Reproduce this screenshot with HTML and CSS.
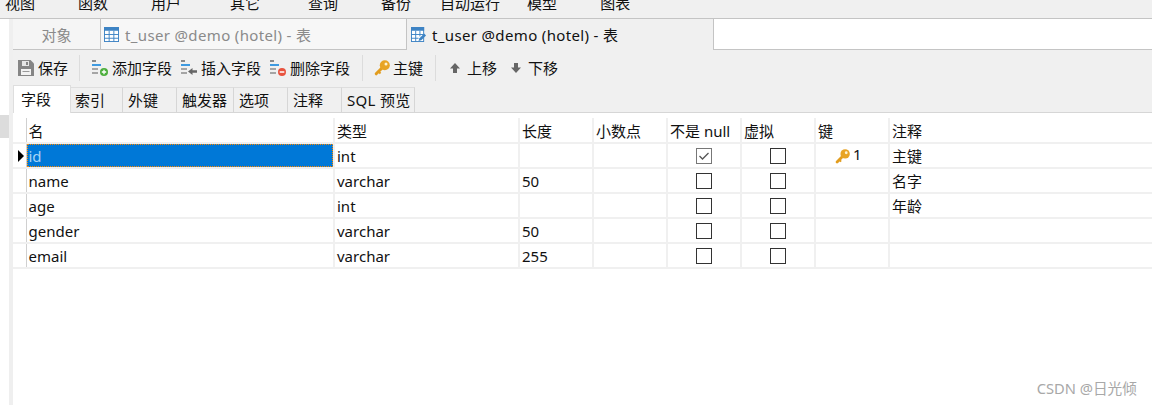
FILE: index.html
```html
<!DOCTYPE html>
<html lang="zh-CN">
<head>
    <meta charset="UTF-8">
    <title>t_user @demo (hotel) - 表</title>
    <link rel="stylesheet" href="styles.css">
</head>
<body>
    <svg class="icon-defs" width="0" height="0">
        <symbol id="key" viewBox="0 0 16 16">
            <path d="M9 7L2.200 13.800" fill="none" stroke="#e29d1f" stroke-width="3" stroke-linecap="round"/>
            <path d="M4.500 11.500l2 2" fill="none" stroke="#e29d1f" stroke-width="2"/>
            <circle cx="10.800" cy="5.200" r="5" fill="#e8a425"/>
            <circle cx="12" cy="4" r="1.500" fill="#fff3d0"/>
        </symbol>
        <symbol id="rows" viewBox="0 0 16 16">
            <rect x="0" y="0" width="4" height="2" fill="#8a8a8a"/>
            <rect x="0" y="4" width="9" height="2" fill="#3f9ae0"/>
            <rect x="0" y="8" width="6" height="2" fill="#a5a5a5"/>
            <rect x="0" y="12" width="6" height="2" fill="#a5a5a5"/>
        </symbol>
    </svg>

    <div class="menu">
        <span>视图</span><span>函数</span><span class="wide">用户</span><span class="wide2">其它</span><span>查询</span><span class="tight">备份</span><span class="tight2">自动运行</span><span>模型</span><span>图表</span>
    </div>

    <div class="main">
        <div class="side"><div class="side-thumb"></div></div>
        <div class="content">
            <div class="tabs">
                <div class="tab tab-objects">对象</div>
                <div class="tab tab-idle">
                    <svg class="tab-icon" viewBox="0 0 16 16"><rect x=".5" y=".5" width="15" height="15" fill="#fff" stroke="#3d83c4"/><rect x="0" y="0" width="16" height="4" fill="#3d83c4"/><path d="M5.500 4v12M10.500 4v12M0 8h16M0 12h16" stroke="#3d83c4"/></svg>
                    <span class="tab-title">t_user @demo (hotel) - 表</span>
                </div>
                <div class="tab tab-active">
                    <svg class="tab-icon" viewBox="0 0 16 16"><rect x=".5" y=".5" width="13" height="15" fill="#fff" stroke="#3d83c4"/><rect x="0" y="0" width="14" height="4" fill="#3d83c4"/><path d="M5 4v12M9.500 4v6M0 8h13M0 12h8" stroke="#3d83c4"/><path d="M8 15l1-3 5-5 2 2-5 5z" fill="#3d83c4"/></svg>
                    <span class="tab-title">t_user @demo (hotel) - 表</span>
                </div>
                <div class="tab-rest"></div>
            </div>

            <div class="toolbar">
                <div class="tool tool-save">
                    <svg class="tool-icon" viewBox="0 0 16 16"><path d="M0 0h12.500L16 3.500V16H0z" fill="#858585"/><rect x="4" y="1" width="7" height="5" fill="#e6e6e6"/><rect x="8" y="2" width="2" height="3" fill="#858585"/><rect x="3" y="9" width="10" height="6" fill="#f2f2f2"/><rect x="4.500" y="11" width="7" height="1" fill="#999"/></svg>
                    保存
                </div>
                <div class="sep sep-save"></div>
                <div class="tool tool-field">
                    <svg class="tool-icon" viewBox="0 0 16 16"><use href="#rows"/><circle cx="12" cy="12" r="4" fill="#4cae3c"/><path d="M9.800 12h4.400M12 9.800v4.400" stroke="#fff" stroke-width="1.300"/></svg>
                    添加字段
                </div>
                <div class="tool tool-field">
                    <svg class="tool-icon" viewBox="0 0 16 16"><use href="#rows"/><path d="M7 11.500l4.500-3.500v2.300H16v2.400h-4.500V15z" fill="#666"/></svg>
                    插入字段
                </div>
                <div class="tool tool-field">
                    <svg class="tool-icon" viewBox="0 0 16 16"><use href="#rows"/><circle cx="12" cy="12" r="4" fill="#e8533f"/><path d="M9.700 12h4.600" stroke="#fff" stroke-width="1.500"/></svg>
                    删除字段
                </div>
                <div class="sep sep-key"></div>
                <div class="tool tool-key">
                    <svg class="tool-icon"><use href="#key"/></svg>
                    主键
                </div>
                <div class="sep sep-move"></div>
                <div class="tool tool-move">
                    <svg class="tool-arrow" viewBox="0 0 10 10"><path d="M5 0l5 5.500H7V10H3V5.500H0z" fill="#666"/></svg>
                    上移
                </div>
                <div class="tool tool-move">
                    <svg class="tool-arrow" viewBox="0 0 10 10"><path d="M5 10L0 4.500h3V0h4v4.500h3z" fill="#666"/></svg>
                    下移
                </div>
            </div>

            <div class="subtabs">
                <div class="subtab subtab-active">字段</div>
                <div class="subtab subtab-after">索引</div>
                <div class="subtab">外键</div>
                <div class="subtab">触发器</div>
                <div class="subtab">选项</div>
                <div class="subtab">注释</div>
                <div class="subtab subtab-sql">SQL 预览</div>
            </div>

            <table class="fields">
                <colgroup>
                    <col class="c-mark"><col class="c-name"><col class="c-type"><col class="c-std"><col class="c-std"><col class="c-std"><col class="c-std"><col class="c-std"><col>
                </colgroup>
                <thead>
                    <tr><th></th><th>名</th><th>类型</th><th>长度</th><th>小数点</th><th>不是 null</th><th>虚拟</th><th>键</th><th>注释</th></tr>
                </thead>
                <tbody>
                    <tr>
                        <td class="mark"><span class="arrow"></span></td><td class="selected">id</td><td>int</td><td></td><td></td>
                        <td class="check"><span class="box checked"><svg viewBox="0 0 14 14"><path d="M2.500 7l3 3 6-6" fill="none" stroke="#555" stroke-width="1.300"/></svg></span></td>
                        <td class="check"><span class="box"></span></td>
                        <td class="keycell"><svg class="key-icon"><use href="#key"/></svg>1</td>
                        <td>主键</td>
                    </tr>
                    <tr>
                        <td></td><td>name</td><td>varchar</td><td>50</td><td></td>
                        <td class="check"><span class="box"></span></td><td class="check"><span class="box"></span></td><td></td><td>名字</td>
                    </tr>
                    <tr>
                        <td></td><td>age</td><td>int</td><td></td><td></td>
                        <td class="check"><span class="box"></span></td><td class="check"><span class="box"></span></td><td></td><td>年龄</td>
                    </tr>
                    <tr>
                        <td></td><td>gender</td><td>varchar</td><td>50</td><td></td>
                        <td class="check"><span class="box"></span></td><td class="check"><span class="box"></span></td><td></td><td></td>
                    </tr>
                    <tr>
                        <td></td><td>email</td><td>varchar</td><td>255</td><td></td>
                        <td class="check"><span class="box"></span></td><td class="check"><span class="box"></span></td><td></td><td></td>
                    </tr>
                </tbody>
            </table>
        </div>
    </div>

    <div class="watermark">CSDN @日光倾</div>
</body>
</html>
```

FILE: styles.css
```css
* {
    box-sizing: border-box;
}

html, body {
    height: 100%;
}

body {
    margin: 0;
    overflow: hidden;
    background: #fff;
    color: #111;
    font-family: "Noto Sans", "Noto Sans CJK SC", sans-serif;
    font-size: 15px;
}

.icon-defs {
    position: absolute;
}

/* menu bar, cut off by the top of the picture */
.menu {
    display: flex;
    height: 19px;
    padding-left: 5px;
    background: #f0f0f0;
    border-bottom: 1px solid #c4c4c4;
    line-height: 7px;
    overflow: hidden;
}

.menu span {
    margin-right: 43px;
}

.menu .wide {
    margin-right: 49px;
}

.menu .wide2 {
    margin-right: 48px;
}

.menu .tight {
    margin-right: 29px;
}

.menu .tight2 {
    margin-right: 27px;
}

.main {
    display: flex;
    height: 386px;
}

.side {
    width: 13px;
    padding-top: 96px;
    border-right: 4px solid #efefef;
}

.side-thumb {
    width: 9px;
    height: 23px;
    background: #dcdcdc;
}

.content {
    flex: 1;
    min-width: 0;
}

/* window tabs */
.tabs {
    display: flex;
    height: 31px;
    background: #f0f0f0;
}

.tab {
    display: flex;
    align-items: center;
    white-space: nowrap;
}

.tab-title {
    letter-spacing: 0.35px;
}

.tab-objects {
    justify-content: center;
    width: 87px;
    background: #f5f5f5;
    border-bottom: 1px solid #c4c4c4;
    color: #8a8a8a;
}

.tab-idle {
    width: 307px;
    padding-left: 3px;
    background: #f7f7f7;
    border-left: 1px solid #c4c4c4;
    border-right: 1px solid #c4c4c4;
    border-bottom: 1px solid #c4c4c4;
    color: #8a8a8a;
}

.tab-active {
    width: 306px;
    padding-left: 4px;
    background: #f0f0f0;
}

.tab-icon {
    width: 15px;
    height: 15px;
    margin-right: 6px;
}

.tab-rest {
    flex: 1;
    background: #fff;
    border-left: 1px solid #c4c4c4;
    border-bottom: 1px solid #c4c4c4;
}

/* toolbar */
.toolbar {
    display: flex;
    align-items: center;
    height: 35px;
    padding-left: 5px;
    background: #f0f0f0;
}

.tool {
    display: flex;
    align-items: center;
    white-space: nowrap;
}

.tool-icon {
    width: 16px;
    height: 16px;
    margin-right: 4px;
}

.tool-key .tool-icon {
    margin-right: 3px;
}

.tool-field {
    margin-right: 9px;
}

.tool-arrow {
    width: 10px;
    height: 10px;
    margin-right: 7px;
}

.tool-move {
    margin-right: 14px;
}

.sep {
    width: 1px;
    height: 26px;
    background: #dcdcdc;
}

.sep-save {
    margin: 0 12px 0 11px;
}

.sep-key {
    margin: 0 11px 0 3px;
}

.sep-move {
    margin: 0 14px 0 12px;
}

/* sub tabs */
.subtabs {
    display: flex;
    align-items: flex-end;
    height: 28px;
    background: #f0f0f0;
    border-bottom: 1px solid #d6d6d6;
}

.subtab {
    min-width: 54px;
    height: 25px;
    padding: 0 6px 0 5px;
    line-height: 24px;
    border-top: 1px solid #dedede;
    border-right: 1px solid #d6d6d6;
    white-space: nowrap;
}

.subtab-active {
    width: 58px;
    height: 28px;
    margin-bottom: -1px;
    padding: 0 7px;
    line-height: 26px;
    background: #fff;
    border: 1px solid #dedede;
    border-bottom: none;
}

.subtab-after {
    min-width: 52px;
    padding-left: 4px;
}

.subtab-sql {
    padding-right: 3px;
    letter-spacing: 0.3px;
}

/* field grid */
.fields {
    width: 100%;
    margin-top: 5px;
    border-collapse: collapse;
    table-layout: fixed;
}

.c-mark {
    width: 13px;
}

.c-name {
    width: 308px;
}

.c-type {
    width: 185px;
}

.c-std {
    width: 74px;
}

.fields th, .fields td {
    height: 25px;
    padding: 0 2px;
    font-weight: normal;
    text-align: left;
    white-space: nowrap;
    border-right: 2px solid #f0f0f0;
    border-bottom: 2px solid #f0f0f0;
}

.fields th:first-child, .fields td:first-child {
    border-right: 1px solid #d0d0d0;
    padding: 0;
}

.fields td:last-child, .fields th:last-child {
    border-right: none;
}

.arrow {
    display: block;
    width: 0;
    height: 0;
    margin-left: 5px;
    border-left: 6px solid #000;
    border-top: 6px solid transparent;
    border-bottom: 6px solid transparent;
}

.fields td.selected {
    background: #0078d7;
    color: #a8d4f5;
    outline: 1px dotted #ff8a00;
    outline-offset: -2px;
}

.fields td.check {
    text-align: center;
}

.box {
    display: block;
    width: 16px;
    height: 16px;
    margin: 0 auto;
    background: #fff;
    border: 1px solid #333;
}

.box.checked {
    border-color: #777;
}

.box svg {
    display: block;
    width: 14px;
    height: 14px;
}

.fields td.keycell {
    padding-left: 19px;
    line-height: 20px;
    vertical-align: top;
}

.key-icon {
    width: 15px;
    height: 15px;
    margin-right: 3px;
    vertical-align: -4px;
}

.watermark {
    position: absolute;
    right: 15px;
    bottom: 7px;
    color: #a8a8a8;
    font-size: 14.700px;
}
```
